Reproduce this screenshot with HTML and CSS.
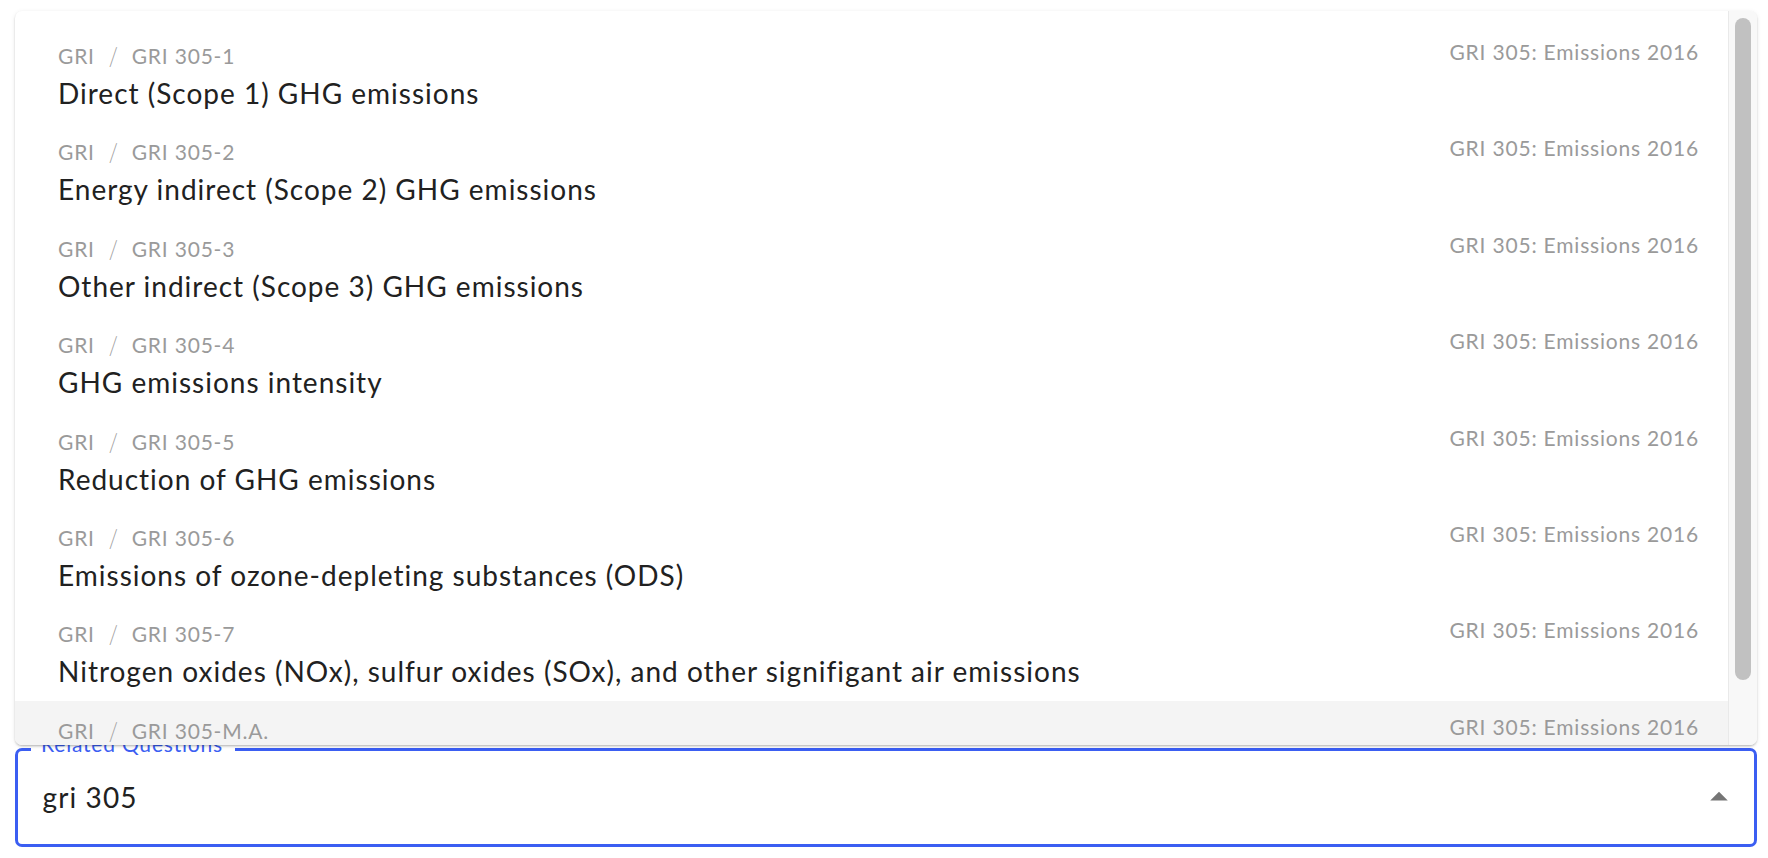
FILE: index.html
```html
<!DOCTYPE html>
<html lang="en">
<head>
<meta charset="utf-8">
<title>Related Questions</title>
<link rel="stylesheet" href="styles.css">
</head>
<body>
<div class="page">
  <div class="autocomplete">
    <div class="popup">
      <ul class="options">
        <li class="option">
          <div class="option-main">
            <div class="crumbs"><span>GRI</span><span class="sep">/</span><span>GRI 305-1</span></div>
            <div class="option-title">Direct (Scope 1) GHG emissions</div>
          </div>
          <span class="option-standard">GRI 305: Emissions 2016</span>
        </li>
        <li class="option">
          <div class="option-main">
            <div class="crumbs"><span>GRI</span><span class="sep">/</span><span>GRI 305-2</span></div>
            <div class="option-title">Energy indirect (Scope 2) GHG emissions</div>
          </div>
          <span class="option-standard">GRI 305: Emissions 2016</span>
        </li>
        <li class="option">
          <div class="option-main">
            <div class="crumbs"><span>GRI</span><span class="sep">/</span><span>GRI 305-3</span></div>
            <div class="option-title">Other indirect (Scope 3) GHG emissions</div>
          </div>
          <span class="option-standard">GRI 305: Emissions 2016</span>
        </li>
        <li class="option">
          <div class="option-main">
            <div class="crumbs"><span>GRI</span><span class="sep">/</span><span>GRI 305-4</span></div>
            <div class="option-title">GHG emissions intensity</div>
          </div>
          <span class="option-standard">GRI 305: Emissions 2016</span>
        </li>
        <li class="option">
          <div class="option-main">
            <div class="crumbs"><span>GRI</span><span class="sep">/</span><span>GRI 305-5</span></div>
            <div class="option-title">Reduction of GHG emissions</div>
          </div>
          <span class="option-standard">GRI 305: Emissions 2016</span>
        </li>
        <li class="option">
          <div class="option-main">
            <div class="crumbs"><span>GRI</span><span class="sep">/</span><span>GRI 305-6</span></div>
            <div class="option-title">Emissions of ozone-depleting substances (ODS)</div>
          </div>
          <span class="option-standard">GRI 305: Emissions 2016</span>
        </li>
        <li class="option">
          <div class="option-main">
            <div class="crumbs"><span>GRI</span><span class="sep">/</span><span>GRI 305-7</span></div>
            <div class="option-title">Nitrogen oxides (NOx), sulfur oxides (SOx), and other signifigant air emissions</div>
          </div>
          <span class="option-standard">GRI 305: Emissions 2016</span>
        </li>
        <li class="option option-focused">
          <div class="option-main">
            <div class="crumbs"><span>GRI</span><span class="sep">/</span><span>GRI 305-M.A.</span></div>
          </div>
          <span class="option-standard">GRI 305: Emissions 2016</span>
        </li>
      </ul>
      <div class="scrollbar"><div class="thumb"></div></div>
    </div>
    <div class="field">
      <span class="field-label">Related Questions</span>
      <span class="field-value">gri 305</span>
      <svg class="arrow" viewBox="0 0 24 24" width="42" height="42" aria-hidden="true"><path d="M7 14l5-5 5 5z"/></svg>
    </div>
  </div>
</div>
</body>
</html>
```

FILE: styles.css
```css
html, body {
  margin: 0;
  padding: 0;
  background: #ffffff;
}

body {
  font-family: "Lato", "Noto Sans", sans-serif;
  color: #212121;
}

.page {
  height: 858px;
  box-sizing: border-box;
  padding: 0 11px 11px 15px;
  display: flex;
  flex-direction: column;
  justify-content: flex-end;
}

.autocomplete {
  position: relative;
}

.popup {
  position: absolute;
  left: 0;
  right: 0;
  bottom: calc(100% + 3px);
  height: 734px;
  z-index: 2;
  display: flex;
  background: #ffffff;
  border-radius: 7px;
  overflow: hidden;
  box-shadow: 0 2px 3px -1px rgba(0, 0, 0, 0.18), 0 1px 2px 0 rgba(0, 0, 0, 0.1), 0 1px 5px 0 rgba(0, 0, 0, 0.08);
}

.options {
  flex: 1;
  list-style: none;
  margin: 0;
  padding: 15px 0 0;
  overflow: hidden;
}

.option {
  display: flex;
  align-items: flex-start;
  height: 96.4px;
  box-sizing: border-box;
  padding: 15px 29px 0 43px;
}

.option-focused {
  background: #f4f4f4;
}

.option-main {
  flex: 1;
  min-width: 0;
}

.crumbs {
  display: flex;
  font-size: 21px;
  line-height: 30px;
  letter-spacing: 0.8px;
  color: #9a9a9a;
}

.sep {
  margin: 0 13px 0 14px;
  color: #a0a0a0;
  font-weight: 300;
  transform: scaleY(1.2);
}

.option-title {
  margin-top: 2px;
  font-size: 28px;
  line-height: 40px;
  letter-spacing: 1px;
  color: #212121;
}

.option-standard {
  font-size: 21px;
  line-height: 22px;
  letter-spacing: 0.8px;
  color: #9a9a9a;
  white-space: nowrap;
}

.scrollbar {
  width: 29px;
  flex: none;
  box-sizing: border-box;
  border-left: 1px solid #e9e9e9;
  background: #f8f8f8;
  padding: 7px 0 0 6px;
}

.thumb {
  width: 16px;
  height: 662px;
  border-radius: 8px;
  background: #c1c1c1;
}

.field {
  position: relative;
  height: 99px;
  box-sizing: border-box;
  border: 3.5px solid #3b5ef2;
  border-radius: 7px;
  display: flex;
  align-items: center;
  padding: 0 14px 2px 24.5px;
}

.field-label {
  position: absolute;
  left: 13px;
  top: -18px;
  padding: 0 12px 0 10px;
  background: #ffffff;
  color: #3b5ef2;
  font-size: 21px;
  line-height: 21px;
  letter-spacing: 0.8px;
}

.field-value {
  flex: 1;
  font-size: 28px;
  line-height: 40px;
  letter-spacing: 1.1px;
  color: #212121;
}

.arrow {
  flex: none;
  fill: #757575;
}
```
